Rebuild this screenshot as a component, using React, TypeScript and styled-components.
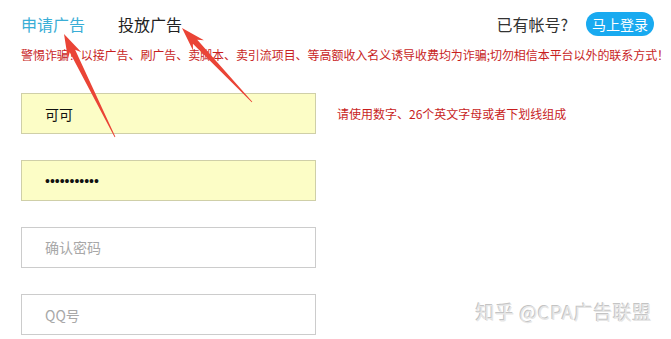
import React from 'react';
import styled, { createGlobalStyle } from 'styled-components';

const GlobalStyle = createGlobalStyle`
  html, body {
    margin: 0;
    padding: 0;
    background: #fff;
  }
  body {
    font-family: "Microsoft YaHei", "Noto Sans CJK SC", "Noto Sans", sans-serif;
  }
`;

const Page = styled.div`
  position: relative;
  width: 671px;
  height: 339px;
  overflow: hidden;
  padding: 0 21px;
  box-sizing: border-box;
`;

const Header = styled.div`
  display: flex;
  align-items: center;
  height: 48px;
`;

const Tabs = styled.div`
  display: flex;
  gap: 33px;
  flex: 1;
`;

const Tab = styled.span<{ $active?: boolean }>`
  font-size: 16px;
  color: ${(p) => (p.$active ? '#3aaed6' : '#222')};
`;

const HasAccount = styled.span`
  font-size: 16px;
  color: #333;
  margin-right: 18px;
`;

const LoginButton = styled.button`
  height: 24px;
  width: 68px;
  padding: 0;
  border: none;
  border-radius: 12px;
  background: #19aaf0;
  color: #fff;
  font-family: inherit;
  font-size: 14px;
  line-height: 24px;
  margin-right: -4px;
`;

const Warning = styled.div`
  font-size: 12px;
  color: #c81e1e;
  white-space: nowrap;
  margin-top: -1px;
  line-height: 16px;
  letter-spacing: -0.06px;
`;

const Form = styled.div`
  display: flex;
  flex-direction: column;
  gap: 26px;
  margin-top: 30px;
`;

const Row = styled.div`
  display: flex;
  align-items: center;
  gap: 21px;
`;

const Field = styled.input<{ $filled?: boolean }>`
  width: 295px;
  height: 41px;
  box-sizing: border-box;
  border: 1px solid ${(p) => (p.$filled ? '#cfcfa8' : '#cccccc')};
  background: ${(p) => (p.$filled ? '#fcfdc6' : '#fff')};
  padding: 0 23px;
  font-family: inherit;
  font-size: 14px;
  color: #111;
  outline: none;
  &[type='password'] {
    font-family: "Liberation Sans", Arial, sans-serif;
    font-size: 14px;
    letter-spacing: 0;
  }
  &::placeholder {
    color: #a8a8a8;
    font-family: "Microsoft YaHei", "Noto Sans CJK SC", sans-serif;
    font-size: 14px;
  }
`;

const Hint = styled.span`
  font-size: 12px;
  color: #c81e1e;
`;

const Watermark = styled.div`
  position: absolute;
  right: 19px;
  bottom: 14px;
  font-size: 19px;
  color: #e6e6e6;
  text-shadow: -1px -1px 0 #c4c4c4, 1px 1px 0 #fff;
  letter-spacing: 0.5px;
`;

const Overlay = styled.svg`
  position: absolute;
  left: 0;
  top: 0;
  pointer-events: none;
`;

type Pt = [number, number];

function arrowPoints(tail: Pt, tip: Pt): string {
  const dx = tip[0] - tail[0];
  const dy = tip[1] - tail[1];
  const len = Math.hypot(dx, dy);
  const ux = dx / len;
  const uy = dy / len;
  const nx = -uy;
  const ny = ux;
  const headLen = 24;
  const headW = 7.5;
  const neckW = 3;
  const tailW = 0.4;
  const bx = tip[0] - ux * headLen;
  const by = tip[1] - uy * headLen;
  const nbx = tip[0] - ux * (headLen - 5);
  const nby = tip[1] - uy * (headLen - 5);
  const pts: Pt[] = [
    [tail[0] + nx * tailW, tail[1] + ny * tailW],
    [nbx + nx * neckW, nby + ny * neckW],
    [bx + nx * headW, by + ny * headW],
    tip,
    [bx - nx * headW, by - ny * headW],
    [nbx - nx * neckW, nby - ny * neckW],
    [tail[0] - nx * tailW, tail[1] - ny * tailW],
  ];
  return pts.map((p) => p.join(',')).join(' ');
}

const Arrow = ({ tail, tip }: { tail: Pt; tip: Pt }) => (
  <polygon points={arrowPoints(tail, tip)} fill="#ea4436" />
);

export default function App() {
  return (
    <>
      <GlobalStyle />
      <Page>
        <Header>
          <Tabs>
            <Tab $active>申请广告</Tab>
            <Tab>投放广告</Tab>
          </Tabs>
          <HasAccount>已有帐号?</HasAccount>
          <LoginButton>马上登录</LoginButton>
        </Header>
        <Warning>
          警惕诈骗！以接广告、刷广告、卖脚本、卖引流项目、等高额收入名义诱导收费均为诈骗;切勿相信本平台以外的联系方式！
        </Warning>
        <Form>
          <Row>
            <Field $filled defaultValue="可可" />
            <Hint>请使用数字、26个英文字母或者下划线组成</Hint>
          </Row>
          <Row>
            <Field $filled type="password" defaultValue="12345678901" />
          </Row>
          <Row>
            <Field type="password" placeholder="确认密码" />
          </Row>
          <Row>
            <Field placeholder="QQ号" />
          </Row>
        </Form>
        <Watermark>知乎 @CPA广告联盟</Watermark>
        <Overlay width="671" height="339" viewBox="0 0 671 339">
          <Arrow tail={[115, 137]} tip={[64, 34]} />
          <Arrow tail={[252, 102]} tip={[182, 28]} />
        </Overlay>
      </Page>
    </>
  );
}
